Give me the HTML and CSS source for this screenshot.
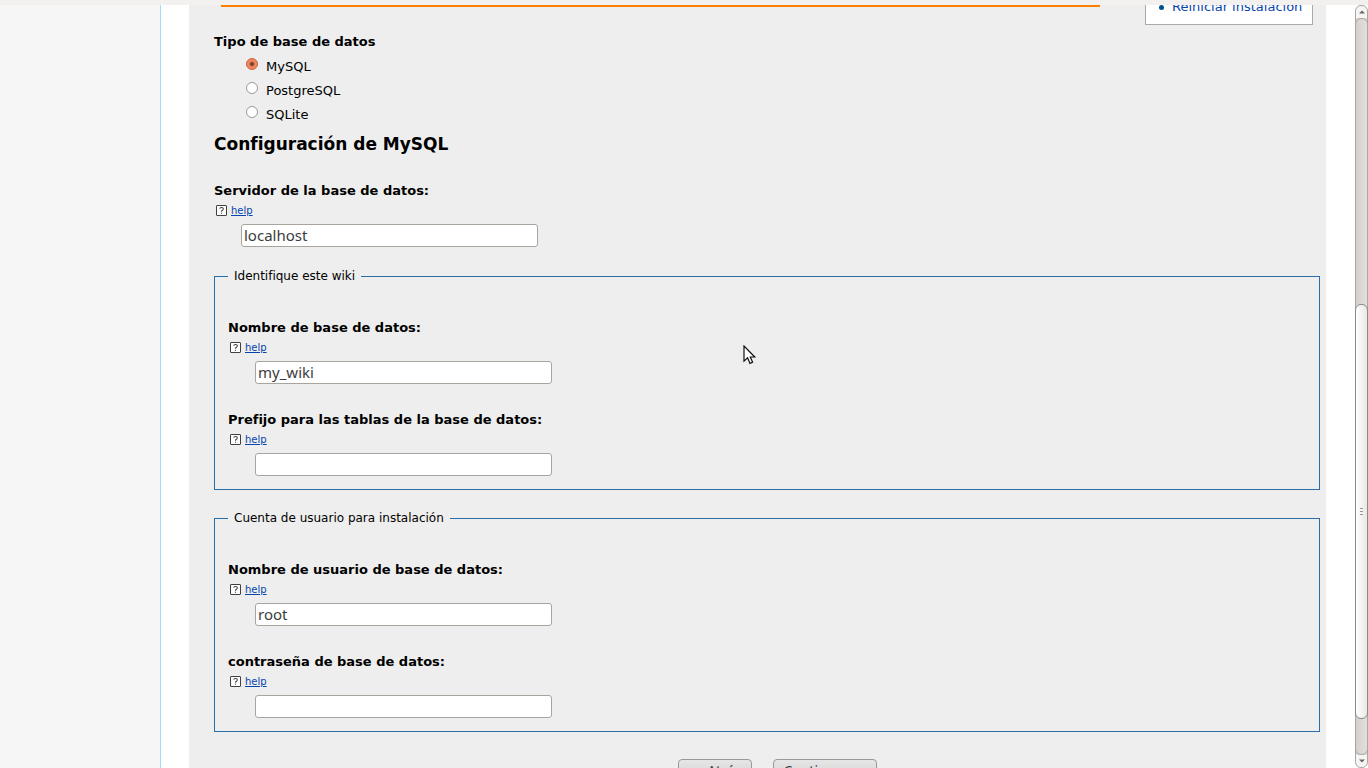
FILE: index.html
```html
<!DOCTYPE html>
<html lang="es">
<head>
<meta charset="utf-8">
<title>Instalación de MediaWiki</title>
<link rel="stylesheet" href="styles.css">
</head>
<body>
<svg class="defs" aria-hidden="true">
  <symbol id="help-icon" viewBox="0 0 11 11">
    <rect x=".5" y=".5" width="10" height="10" rx=".5" fill="#fff" stroke="#404040"/>
    <path d="M3.6 3.6 Q3.9 2.5 5.5 2.5 Q7.4 2.5 7.3 4 Q7.2 5 5.6 5.9 V6.8 M5.5 7.7 V8.8" fill="none" stroke="#404040" stroke-width="1.1"/>
  </symbol>
</svg>
<div class="window-edge"></div>
<div class="viewport">
  <div class="side"></div>
  <div class="page">
    <main class="content">
      <div class="top-row">
        <div class="rule"></div>
        <ul class="steps"><li><a href="#restart">Reiniciar instalación</a></li></ul>
      </div>
      <form class="form">
        <div class="db-type" role="radiogroup" aria-labelledby="type-label">
          <div class="label" id="type-label">Tipo de base de datos</div>
          <div class="option"><input class="radio" type="radio" name="type" id="mysql" checked><label for="mysql">MySQL</label></div>
          <div class="option"><input class="radio" type="radio" name="type" id="postgres"><label for="postgres">PostgreSQL</label></div>
          <div class="option"><input class="radio" type="radio" name="type" id="sqlite"><label for="sqlite">SQLite</label></div>
        </div>
        <h2 class="heading">Configuración de MySQL</h2>
        <div class="field">
          <label class="label" for="server">Servidor de la base de datos:</label>
          <div class="help"><svg class="help-icon"><use href="#help-icon"/></svg><a href="#help-server">help</a></div>
          <input class="text" type="text" id="server" value="localhost">
        </div>
        <fieldset class="group">
          <legend>Identifique este wiki</legend>
          <div class="field">
            <label class="label" for="dbname">Nombre de base de datos:</label>
            <div class="help"><svg class="help-icon"><use href="#help-icon"/></svg><a href="#help-dbname">help</a></div>
            <input class="text" type="text" id="dbname" value="my_wiki">
          </div>
          <div class="field">
            <label class="label" for="prefix">Prefijo para las tablas de la base de datos:</label>
            <div class="help"><svg class="help-icon"><use href="#help-icon"/></svg><a href="#help-prefix">help</a></div>
            <input class="text" type="text" id="prefix">
          </div>
        </fieldset>
        <fieldset class="group">
          <legend>Cuenta de usuario para instalación</legend>
          <div class="field">
            <label class="label" for="user">Nombre de usuario de base de datos:</label>
            <div class="help"><svg class="help-icon"><use href="#help-icon"/></svg><a href="#help-user">help</a></div>
            <input class="text" type="text" id="user" value="root">
          </div>
          <div class="field">
            <label class="label" for="password">contraseña de base de datos:</label>
            <div class="help"><svg class="help-icon"><use href="#help-icon"/></svg><a href="#help-password">help</a></div>
            <input class="text" type="password" id="password">
          </div>
        </fieldset>
        <div class="buttons">
          <button class="button" type="button">← Atrás</button>
          <button class="button" type="submit">Continuar →</button>
        </div>
      </form>
    </main>
  </div>
  <div class="scrollbar" aria-hidden="true">
    <div class="arrow arrow-up"><svg viewBox="0 0 6 4"><path d="M0 3.5 L3 .5 L6 3.5Z" fill="#666"/></svg></div>
    <div class="track">
      <div class="space-above"></div>
      <div class="thumb"><i></i><i></i><i></i></div>
      <div class="space-below"></div>
    </div>
    <div class="arrow arrow-down"><svg viewBox="0 0 6 4"><path d="M0 .5 L3 3.5 L6 .5Z" fill="#666"/></svg></div>
  </div>
</div>
<svg class="pointer" viewBox="0 0 13 20" aria-hidden="true"><path d="M1 1 V16.2 L4.6 12.8 L7 18.4 L9.6 17.3 L7.3 12 H11.8 Z" fill="#fff" stroke="#111" stroke-width="1.2"/></svg>
</body>
</html>
```
FILE: styles.css
```css
* { box-sizing: border-box; }
body {
  margin: 0;
  height: 100vh;
  overflow: hidden;
  display: flex;
  flex-direction: column;
  background: #fff;
  color: #000;
  font: 13px/18px "DejaVu Sans", sans-serif;
}
a { color: #0645ad; }
.defs { display: none; }
.window-edge { flex: none; height: 5px; background: #f2f1f0; }
.viewport { flex: 1; min-height: 0; display: flex; overflow: hidden; }
.side { flex: none; width: 161px; background: #f6f6f6; border-right: 1px solid #a7d7f9; }
.page { flex: 1; min-width: 0; padding: 0 29px 0 28px; overflow: hidden; }
.content { min-height: 100%; background: #eee; }
.top-row {
  display: flex;
  align-items: flex-end;
  height: 20px;
  overflow: hidden;
  padding: 0 13px 0 32px;
}
.rule { flex: 1; align-self: flex-start; height: 2px; margin-right: 45px; background: #ff8000; }
.steps {
  width: 168px;
  margin: 0;
  padding: 8px 0 7px 13px;
  background: #fff;
  border: 1px solid #aaa;
  line-height: 20px;
  white-space: nowrap;
  list-style: none;
}
.steps li { display: flex; align-items: center; gap: 8px; }
.steps li::before {
  content: "";
  width: 5px;
  height: 5px;
  border-radius: 50%;
  background: #00528c;
}
.steps a { text-decoration: none; }
.form { padding: 8px 6px 0 25px; }
.label { display: block; font-weight: bold; }
.db-type { display: flex; flex-direction: column; }
.db-type .label { margin-bottom: 3px; }
.option { display: flex; height: 24px; padding-left: 32px; line-height: 26px; gap: 8px; }
.radio {
  appearance: none;
  width: 12px;
  height: 12px;
  margin: 4px 0;
  border: 1px solid #999;
  border-radius: 50%;
  background: #fff;
}
.radio:checked {
  border-color: #c8623f;
  background: radial-gradient(circle, #6b3a28 0 1px, #f2875d 3px);
}
.heading { margin: 6px 0 26px; font-size: 17px; line-height: 24px; }
.help {
  display: flex;
  align-items: center;
  gap: 4px;
  margin: 2px 0 4px;
  padding-left: 2px;
  font-size: 10px;
}
.help-icon { width: 11px; height: 11px; margin-bottom: 1px; }
.text {
  display: block;
  width: 297px;
  height: 23px;
  margin: 0 0 0 27px;
  padding: 0 2px 2px;
  border: 1px solid #aaa49e;
  border-radius: 3px;
  background: #fff;
  color: #3c3c3c;
  font: 15px "Noto Sans", sans-serif;
}
.group {
  min-width: 0;
  margin: 20px 0 0;
  padding: 34px 13px 13px;
  border: 1px solid #2a6fa8;
}
.group + .group { margin-top: 19px; }
.group legend { padding: 0 6px; font-size: 12px; }
.group .field + .field { margin-top: 27px; }
.buttons { display: flex; justify-content: center; gap: 21px; padding: 27px 0 27px 21px; }
.button {
  min-width: 74px;
  height: 25px;
  padding: 0 9px 2px;
  border: 1px solid #999;
  border-radius: 4px;
  background: linear-gradient(#e6e6e6, #cfcfcf);
  color: #3c3c3c;
  font: 14px/20px "Noto Sans", sans-serif;
}
.scrollbar {
  flex: none;
  width: 13px;
  display: flex;
  flex-direction: column;
  border: 1px solid #aaa6a2;
  border-radius: 6px;
  background: #dcd8d6;
}
.arrow {
  flex: none;
  height: 12px;
  display: flex;
  align-items: center;
  justify-content: center;
  background: #f6f5f4;
}
.arrow svg { width: 6px; height: 4px; }
.arrow-up { border-radius: 6px 6px 0 0; }
.arrow-down { border-radius: 0 0 6px 6px; }
.track {
  flex: 1;
  display: flex;
  flex-direction: column;
  margin: 0 -1px;
  border: 1px solid #aaa6a2;
  border-radius: 6px;
  background: linear-gradient(90deg, #d4d0ce, #e4e0de);
}
.space-above { flex: 286; }
.space-below { flex: 35; }
.thumb {
  flex: 414;
  display: flex;
  flex-direction: column;
  align-items: center;
  justify-content: center;
  gap: 2px;
  margin: 0 -1px;
  border: 1px solid #8d8985;
  border-radius: 6px;
  background: linear-gradient(90deg, #fff, #e9e8e6);
}
.thumb i { width: 3px; height: 1px; background: #999; }
.pointer { position: absolute; left: 743px; top: 345px; width: 13px; height: 20px; }
```
